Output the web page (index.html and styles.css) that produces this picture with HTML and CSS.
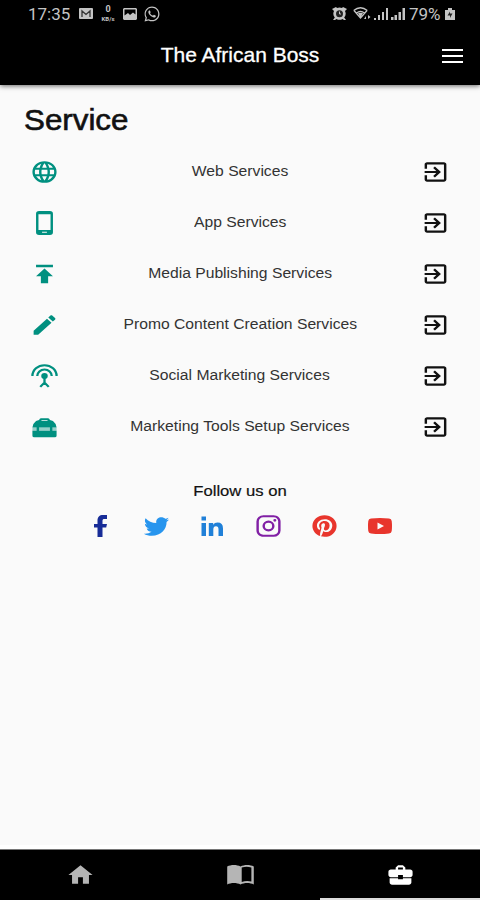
FILE: index.html
```html
<!DOCTYPE html>
<html lang="en">
<head>
    <meta charset="UTF-8">
    <meta name="viewport" content="width=device-width, initial-scale=1.0">
    <title>The African Boss</title>
    <link rel="stylesheet" href="styles.css">
</head>
<body>
    <svg class="sprite">
        <symbol id="exit" viewBox="0 0 24 24" preserveAspectRatio="none">
            <path d="M10.09 15.59 11.5 17l5-5-5-5-1.41 1.41L12.67 11H3v2h9.67l-2.58 2.59zM19 3H5c-1.11 0-2 .9-2 2v4h2V5h14v14H5v-4H3v4c0 1.1.89 2 2 2h14c1.1 0 2-.9 2-2V5c0-1.1-.9-2-2-2z"/>
        </symbol>
    </svg>

    <header class="header">
        <div class="status-bar">
            <span class="time">17:35</span>
            <svg class="mail" viewBox="0 0 14 11"><rect width="14" height="11" rx="1"/><path class="envelope" d="M3 9V3l4 3.500L11 3v6"/></svg>
            <span class="speed"><b>0</b><small>KB/s</small></span>
            <svg class="photo" viewBox="0 0 14 12"><path fill-rule="evenodd" d="M1 0h12l1 1v10l-1 1H1l-1-1V1zM1.500 1.500v6L5 5l2 2 3-2.500 2.500 2v-5z"/></svg>
            <svg class="whatsapp" viewBox="0 0 24 24"><path d="M12.040 2c-5.460 0-9.910 4.450-9.910 9.910 0 1.750.460 3.450 1.320 4.950L2.050 22l5.250-1.380c1.450.790 3.080 1.210 4.740 1.210 5.460 0 9.910-4.450 9.910-9.910S17.500 2 12.040 2m0 1.670c4.540 0 8.240 3.700 8.240 8.240s-3.700 8.240-8.240 8.240c-1.480 0-2.930-.4-4.200-1.150l-3.420.82.830-3.040a8.240 8.240 0 0 1 6.790-13.110M8.530 7.330c-.5 0-1.430.7-1.430 2.120 0 3 4.600 7.200 7.600 7.200 1.400 0 2.400-.9 2.400-2.150 0-.3-.2-.5-.5-.6l-2-.9c-.7 0-.8 1.200-1.500 1.100-1.600-.5-2.900-1.700-3.700-3.100 0-.5.9-.9.800-1.500l-.8-1.900c-.2-.3-.6-.3-.87-.27"/></svg>
            <span class="spacer"></span>
            <svg class="alarm" viewBox="0 0 15 13"><path d="M0 2 4 0l1 1a6 6 0 0 1 5 0l1-1 4 2-2 2a6 6 0 0 1-.8 6.500L14 13h-2l-1.500-1a6 6 0 0 1-6 0L3 13H1l1.800-2.500A6 6 0 0 1 2 4z"/><circle class="cut" cx="7.500" cy="6.700" r="3.500"/><path class="hand" d="M7.500 4.500v2.500H9"/></svg>
            <svg class="wifi" viewBox="0 0 18 13"><path class="line" d="M.700 3.500q6.800-5.500 13.600 0M3.500 6q4-3 8 0M1 3.500l6.500 7.500L14 3.500"/><path d="M5 6h5L7.500 11zM11 12l2-3v3zM15 8l2.500 2-2.500 2z"/></svg>
            <svg class="signal" viewBox="0 0 14 12"><path d="M0 10h2v2H0zM4 7h2v5H4zM8 4h2v8H8zM12 0h2v12h-2z"/></svg>
            <svg class="signal" viewBox="0 0 14 12"><path d="M0 9h2.500v3H0zM3.500 7H6v5H3.500zM7.500 4H10v8H7.500zM11.500 0H14v12h-2.500z"/></svg>
            <span class="battery">79%</span>
            <svg class="cell" viewBox="0 0 10 12"><path d="M3 0h4v2h3v10H0V2h3z"/><path class="cut" d="M5 3.500v2h2.500L5 10V7.500H2.500z"/></svg>
        </div>
        <div class="toolbar">
            <h1 class="title">The African Boss</h1>
            <button class="menu" aria-label="Menu"><i></i><i></i><i></i></button>
        </div>
    </header>

    <main class="content">
        <h2 class="heading">Service</h2>
        <ul class="services">
            <li>
                <svg class="icon" viewBox="0 0 24 24" preserveAspectRatio="none"><path d="M16.360 14c.080-.660.140-1.320.140-2s-.060-1.340-.140-2h3.380c.160.640.260 1.310.260 2s-.1 1.360-.260 2m-5.150 5.560c.6-1.110 1.060-2.310 1.380-3.560h2.950a8.030 8.030 0 0 1-4.330 3.560M14.340 14H9.660c-.1-.660-.160-1.320-.160-2s.060-1.350.160-2h4.680c.090.650.160 1.320.160 2s-.070 1.340-.160 2M12 19.960c-.830-1.200-1.500-2.530-1.910-3.960h3.820c-.410 1.430-1.080 2.760-1.910 3.960M8 8H5.080A7.920 7.920 0 0 1 9.400 4.440C8.800 5.550 8.350 6.750 8 8m-2.920 8H8c.350 1.250.8 2.450 1.400 3.560A8 8 0 0 1 5.080 16m-.820-2C4.100 13.360 4 12.690 4 12s.1-1.360.260-2h3.380c-.080.660-.140 1.320-.140 2s.060 1.340.140 2M12 4.030c.830 1.200 1.500 2.540 1.910 3.970h-3.820c.410-1.430 1.080-2.770 1.910-3.970M18.920 8h-2.950a15.650 15.650 0 0 0-1.380-3.560c1.840.630 3.370 1.900 4.330 3.560M12 2a10 10 0 1 0 0 20 10 10 0 0 0 0-20"/></svg>
                <span>Web Services</span>
                <svg class="icon exit"><use href="#exit"/></svg>
            </li>
            <li>
                <svg class="icon" viewBox="0 0 24 24" preserveAspectRatio="none"><path fill-rule="evenodd" d="M7.500 1h9A2.500 2.500 0 0 1 19 3.500v17a2.500 2.500 0 0 1-2.500 2.500h-9A2.500 2.500 0 0 1 5 20.500v-17A2.500 2.500 0 0 1 7.500 1zM7 4v14.500h10V4zm3 16v1h4v-1z"/></svg>
                <span>App Services</span>
                <svg class="icon exit"><use href="#exit"/></svg>
            </li>
            <li>
                <svg class="icon" viewBox="0 0 24 24" preserveAspectRatio="none"><path d="M5 3.500v2.200h14V3.500zM5 14h4v6.500h6V14h4l-7-7z"/></svg>
                <span>Media Publishing Services</span>
                <svg class="icon exit"><use href="#exit"/></svg>
            </li>
            <li>
                <svg class="icon" viewBox="0 0 24 24" preserveAspectRatio="none"><path d="M20.710 7.040c.390-.390.390-1.040 0-1.410l-2.340-2.340c-.370-.390-1.020-.390-1.410 0l-1.840 1.830 3.750 3.750M3 17.250V21h3.750L17.810 9.930l-3.750-3.750z"/></svg>
                <span>Promo Content Creation Services</span>
                <svg class="icon exit"><use href="#exit"/></svg>
            </li>
            <li>
                <svg class="icon" viewBox="0 0 24 24" preserveAspectRatio="none"><circle cx="12" cy="12" r="2.700"/><path class="line" d="M2 12a10 10 0 0 1 20 0M6 12a6 6 0 0 1 12 0M12 13v5.500M8.500 22 12 18l3.500 4"/></svg>
                <span>Social Marketing Services</span>
                <svg class="icon exit"><use href="#exit"/></svg>
            </li>
            <li>
                <svg class="icon" viewBox="0 0 24 24" preserveAspectRatio="none"><path fill-rule="evenodd" d="M9 4h6q1 0 1.500 1.500L19 6.500q2.500 2 3 6H2q.500-4 3-6l2.500-1Q8 4 9 4zm.500 1.500v.800h5v-.800zM2 15.500h20V20q0 1.500-1.500 1.500h-17Q2 21.500 2 20z"/><path opacity=".4" d="M2 12.500h20v3H2z"/><path d="M5.500 12h2v5h-2zM16.500 12h2v5h-2z"/></svg>
                <span>Marketing Tools Setup Services</span>
                <svg class="icon exit"><use href="#exit"/></svg>
            </li>
        </ul>

        <p class="follow">Follow us on</p>
        <div class="social">
            <svg class="facebook" viewBox="0 0 13 22" preserveAspectRatio="none"><path d="M3.500 22V12.500H0V9h3.500V5.500C3.500 2 5.500 0 9 0h4v4h-2.500C9 4 8.500 4.600 8.500 6v3H13l-.800 3.500H8.500V22z"/></svg>
            <svg class="icon twitter" viewBox="0 0 24 24" preserveAspectRatio="none"><path d="M22.460 6c-.770.350-1.600.580-2.460.690.880-.530 1.560-1.370 1.880-2.380-.830.500-1.750.850-2.720 1.050C18.370 4.500 17.260 4 16 4c-2.350 0-4.270 1.920-4.270 4.290 0 .340.040.670.110.980C8.280 9.090 5.110 7.380 3 4.790c-.370.630-.580 1.370-.580 2.150 0 1.490.750 2.810 1.910 3.560-.710 0-1.370-.200-1.950-.500v.030c0 2.080 1.480 3.820 3.440 4.210a4.220 4.220 0 0 1-1.930.070 4.280 4.280 0 0 0 4 2.980 8.521 8.521 0 0 1-5.330 1.840c-.340 0-.680-.020-1.020-.060C3.440 20.290 5.700 21 8.120 21 16 21 20.330 14.460 20.330 8.790c0-.190 0-.370-.010-.560.840-.600 1.560-1.360 2.140-2.230"/></svg>
            <svg class="linkedin" viewBox="0 0 22 20" preserveAspectRatio="none"><path d="M.500.500h4.500v4H.500zM.500 7H5v13H.500zM7.800 7h4.400v1.800q1.300-2.200 4.300-2.200 5.500 0 5.500 5.900V20h-4.500v-6.700q0-3-2.500-3-2.700 0-2.700 3.400V20H7.800z"/></svg>
            <svg class="icon instagram" viewBox="0 0 24 24" preserveAspectRatio="none"><path d="M7.800 2h8.400C19.400 2 22 4.600 22 7.800v8.400a5.800 5.800 0 0 1-5.800 5.800H7.800C4.600 22 2 19.400 2 16.200V7.800A5.800 5.800 0 0 1 7.800 2m-.2 2A3.600 3.600 0 0 0 4 7.600v8.800C4 18.390 5.610 20 7.600 20h8.800a3.600 3.600 0 0 0 3.600-3.600V7.600C20 5.610 18.390 4 16.400 4zm9.650 1.500a1.250 1.250 0 1 1 0 2.500 1.250 1.250 0 0 1 0-2.500M12 7a5 5 0 1 1 0 10 5 5 0 0 1 0-10m0 2a3 3 0 1 0 0 6 3 3 0 0 0 0-6"/></svg>
            <svg class="icon pinterest" viewBox="0 0 24 24" preserveAspectRatio="none"><path d="M9.040 21.540c.960.290 1.930.460 2.960.460a10 10 0 1 0-10-10c0 4.250 2.670 7.900 6.440 9.340-.090-.780-.180-2.070 0-2.960l1.150-4.940s-.290-.580-.290-1.500c0-1.380.860-2.410 1.840-2.410.860 0 1.260.630 1.260 1.440 0 .860-.570 2.090-.860 3.270-.170.980.520 1.840 1.520 1.840 1.780 0 3.160-1.900 3.160-4.580 0-2.400-1.720-4.040-4.190-4.040-2.820 0-4.480 2.100-4.480 4.310 0 .860.280 1.730.740 2.300.090.060.090.140.060.290l-.290 1.090c0 .170-.110.230-.280.110-1.280-.560-2.020-2.380-2.020-3.850 0-3.160 2.240-6.030 6.560-6.030 3.440 0 6.120 2.470 6.120 5.750 0 3.440-2.130 6.200-5.180 6.200-.970 0-1.920-.520-2.260-1.130l-.670 2.370c-.230.860-.860 2.010-1.290 2.700z"/></svg>
            <svg class="youtube" viewBox="0 0 24 16" preserveAspectRatio="none"><path fill-rule="evenodd" d="M3 .500Q12-.500 21 .500q2.500.300 2.700 2.500.600 5 0 10-.200 2.200-2.700 2.500-9 1-18 0Q.500 15.200.300 13q-.600-5 0-10Q.500.800 3 .500zM9.500 4.500v7l6.500-3.500z"/></svg>
        </div>
    </main>

    <nav class="nav">
        <a href="#"><svg class="icon" viewBox="0 0 24 24" preserveAspectRatio="none"><path d="M10 20v-6h4v6h5v-8h3L12 3 2 12h3v8z"/></svg></a>
        <a href="#"><svg class="icon book" viewBox="0 0 24 24" preserveAspectRatio="none"><path fill-rule="evenodd" d="M12 3.500C10.500 2.500 8.500 2 6.500 2S2.500 2.500 1 3.500v18c1.500-1 3.500-1.500 5.500-1.500s4 .5 5.500 1.500c1.500-1 3.500-1.500 5.500-1.500s4 .5 5.500 1.500v-18C21.500 2.500 19.500 2 17.500 2S13.500 2.500 12 3.500zM21 18.500q-4-1.200-8 .500V4.500q4-1.300 8 0z"/></svg></a>
        <a href="#" class="active"><svg class="icon" viewBox="0 0 24 24" preserveAspectRatio="none"><path fill-rule="evenodd" d="M10 16v-1H3v4c0 1.110.890 2 2 2h14c1.110 0 2-.890 2-2v-4h-7v1zM20 7h-4V5l-2-2h-4L8 5v2H4c-1.100 0-2 .9-2 2v3c0 1.110.890 2 2 2h6v-2h4v2h6c1.100 0 2-.9 2-2V9c0-1.100-.9-2-2-2zm-6 0h-4V5h4z"/></svg></a>
    </nav>
</body>
</html>
```

FILE: styles.css
```css
* {
    box-sizing: border-box;
}

body {
    margin: 0;
    height: 900px;
    display: flex;
    flex-direction: column;
    background-color: #fafafa;
    font-family: "Liberation Sans", Arial, sans-serif;
    color: #111;
    overflow: hidden;
}

.sprite {
    display: none;
}

svg {
    display: block;
    flex: none;
    fill: currentColor;
}

.icon {
    width: 29px;
    height: 26px;
}

.line {
    fill: none;
    stroke: currentColor;
    stroke-width: 1.9;
}

.header {
    height: 85px;
    background-color: #000;
    color: #fff;
    box-shadow: 0 1px 5px rgba(0, 0, 0, 0.6);
}

.status-bar {
    display: flex;
    align-items: center;
    height: 27px;
    padding: 0 25px 0 28px;
    font-family: Roboto, sans-serif;
    font-size: 17px;
    color: #c4c4c4;
}

.status-bar .cut {
    fill: #222;
}

.status-bar .line {
    stroke-width: 1.3;
}

.status-bar .envelope {
    fill: none;
    stroke: #333;
    stroke-width: 1.3;
}

.status-bar .hand {
    fill: none;
    stroke: #c4c4c4;
}

.time {
    width: 51px;
}

.mail {
    width: 14px;
    height: 11px;
}

.speed {
    display: flex;
    flex-direction: column;
    align-items: center;
    width: 18px;
    margin: 0 6px;
}

.speed b {
    font-size: 9px;
    line-height: 11px;
}

.speed small {
    font-size: 6px;
    line-height: 8px;
    font-weight: bold;
}

.photo {
    width: 14px;
    height: 12px;
}

.whatsapp {
    width: 18px;
    height: 18px;
    margin-left: 6px;
}

.spacer {
    flex: 1;
}

.alarm {
    width: 15px;
    height: 13px;
    margin-right: 6px;
}

.wifi {
    width: 18px;
    height: 13px;
    margin-right: 3px;
}

.signal {
    width: 14px;
    height: 12px;
    margin-right: 3px;
}

.battery {
    width: 33px;
    margin: 0 3px 0 1px;
    font-size: 17px;
}

.cell {
    width: 10px;
    height: 12px;
}

.toolbar {
    display: grid;
    grid-template-columns: 1fr auto 1fr;
    align-items: center;
    height: 57px;
    padding-right: 17px;
    padding-left: 17px;
}

.title {
    grid-column: 2;
    margin: 0;
    padding-bottom: 2px;
    font-size: 21px;
    font-weight: normal;
    -webkit-text-stroke: 0.3px #fff;
}

.menu {
    justify-self: end;
    display: flex;
    flex-direction: column;
    gap: 4px;
    width: 21px;
    padding: 0;
    border: none;
    background: none;
}

.menu i {
    height: 2px;
    background-color: #fff;
}

.content {
    flex: 1;
    padding: 17px 30px 0;
    border-bottom: 4px solid #fff;
}

/* the app's typeface is wider than Arial */
.heading {
    width: max-content;
    margin: 0 0 0 -6px;
    font-size: 29px;
    line-height: 36px;
    font-weight: normal;
    transform: scaleX(1.08);
    transform-origin: left;
    -webkit-text-stroke: 0.6px #111;
}

.services {
    margin: 8px 0 0;
    padding: 0;
    list-style: none;
    color: #009080;
}

.services li {
    display: flex;
    align-items: center;
    justify-content: space-between;
    height: 51px;
}

.services span {
    padding-bottom: 1px;
    font-size: 14px;
    color: #333;
    white-space: nowrap;
    transform: scaleX(1.12);
}

.services .exit {
    color: #111;
}

.follow {
    margin: 29px 0 0;
    font-size: 15px;
    line-height: 20px;
    text-align: center;
    transform: scaleX(1.11);
    -webkit-text-stroke: 0.2px #111;
}

.social {
    display: grid;
    grid-template-columns: repeat(6, 56px);
    justify-content: center;
    place-items: center;
    height: 50px;
}

.facebook {
    width: 13px;
    height: 22px;
    color: #172c97;
}

.twitter {
    color: #2795ee;
}

.linkedin {
    width: 22px;
    height: 20px;
    color: #2080d8;
}

.instagram {
    color: #8120a5;
}

.pinterest {
    color: #e8352c;
}

.youtube {
    width: 24px;
    height: 16px;
    color: #e8352c;
}

.nav {
    display: grid;
    grid-template-columns: repeat(3, 1fr);
    height: 51px;
    border-top: 1px solid #777;
    background: linear-gradient(#ddd, #ddd) right bottom / 160px 2px no-repeat #000;
}

.nav a {
    display: flex;
    align-items: center;
    justify-content: center;
    padding-bottom: 1px;
    color: #b5b5b5;
}

.nav .active {
    color: #fff;
}

.book {
    height: 24px;
}
```
